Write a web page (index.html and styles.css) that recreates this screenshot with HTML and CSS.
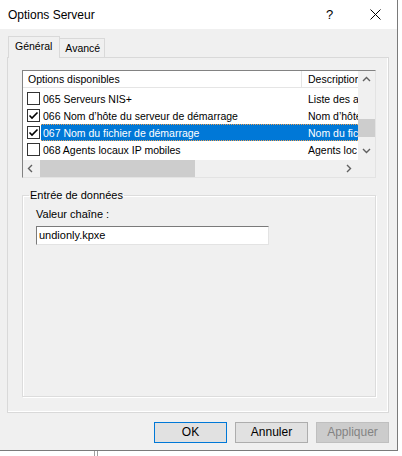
FILE: index.html
```html
<!DOCTYPE html>
<html lang="fr">
<head>
<meta charset="utf-8">
<title>Options Serveur</title>
<link rel="stylesheet" href="styles.css">
</head>
<body>
<div class="window">
  <div class="titlebar">
    <span class="title">Options Serveur</span>
    <span class="help">?</span>
    <span class="close"><svg width="11" height="11" viewBox="0 0 11 11"><path d="M0.5 0.5 L10.5 10.5 M10.5 0.5 L0.5 10.5" stroke="#000" stroke-width="1" fill="none"/></svg></span>
  </div>
  <div class="tabs">
    <div class="tab active">Général</div>
    <div class="tab">Avancé</div>
  </div>
  <div class="panel">
    <div class="listbox">
      <div class="list-main">
        <div class="header">
          <div class="hcell c1">Options disponibles</div>
          <div class="hcell c2">Description</div>
        </div>
        <div class="rows">
          <div class="row">
            <span class="check"></span>
            <div class="sel"><span class="cell c1">065 Serveurs NIS+</span><span class="cell c2">Liste des a</span></div>
          </div>
          <div class="row">
            <span class="check"><svg width="11" height="11" viewBox="0 0 11 11"><path d="M1.5 5.5 L4 8 L9.5 2.5" stroke="#000" stroke-width="1.6" fill="none"/></svg></span>
            <div class="sel"><span class="cell c1">066 Nom d’hôte du serveur de démarrage</span><span class="cell c2">Nom d’hôte</span></div>
          </div>
          <div class="row selected">
            <span class="check"><svg width="11" height="11" viewBox="0 0 11 11"><path d="M1.5 5.5 L4 8 L9.5 2.5" stroke="#000" stroke-width="1.6" fill="none"/></svg></span>
            <div class="sel"><span class="cell c1">067 Nom du fichier de démarrage</span><span class="cell c2">Nom du fic</span></div>
          </div>
          <div class="row">
            <span class="check"></span>
            <div class="sel"><span class="cell c1">068 Agents locaux IP mobiles</span><span class="cell c2">Agents loc</span></div>
          </div>
        </div>
      </div>
      <div class="vscroll">
        <svg class="arrow" width="9" height="6" viewBox="0 0 9 6"><path d="M1 5 L4.5 1.5 L8 5" stroke="#606060" stroke-width="1.4" fill="none"/></svg>
        <div class="vtrack"><div class="vthumb"></div></div>
        <svg class="arrow" width="9" height="6" viewBox="0 0 9 6"><path d="M1 1 L4.5 4.5 L8 1" stroke="#606060" stroke-width="1.4" fill="none"/></svg>
      </div>
      <div class="hscroll">
        <svg class="harrow" width="6" height="9" viewBox="0 0 6 9"><path d="M5 1 L1.5 4.5 L5 8" stroke="#606060" stroke-width="1.4" fill="none"/></svg>
        <div class="htrack"><div class="hthumb"></div></div>
        <svg class="harrow" width="6" height="9" viewBox="0 0 6 9"><path d="M1 1 L4.5 4.5 L1 8" stroke="#606060" stroke-width="1.4" fill="none"/></svg>
      </div>
      <div class="corner"></div>
    </div>
    <fieldset class="group">
      <legend>Entrée de données</legend>
      <div class="group-body">
        <div class="label">Valeur chaîne :</div>
        <div class="input">undionly.kpxe</div>
      </div>
    </fieldset>
  </div>
  <div class="buttons">
    <div class="btn default">OK</div>
    <div class="btn">Annuler</div>
    <div class="btn disabled">Appliquer</div>
  </div>
</div>
<div class="below"></div>
</body>
</html>
```
FILE: styles.css
```css
html, body {
  margin: 0;
  padding: 0;
}
body {
  background: #fff;
  font-family: "Liberation Sans", Arial, sans-serif;
  font-size: 11px;
  color: #000;
  width: 402px;
  height: 456px;
  overflow: hidden;
}
.window {
  width: 397px;
  height: 450px;
  background: #f0f0f0;
  border-right: 1px solid #7a7a7a;
  border-bottom: 1px solid #7a7a7a;
  display: flex;
  flex-direction: column;
}
.titlebar {
  height: 29px;
  flex: none;
  background: #fff;
  display: flex;
  align-items: center;
  padding-left: 8px;
  font-size: 12px;
}
.title {
  flex: 1;
}
.help {
  width: 12px;
  margin-right: 32px;
  font-size: 13px;
}
.close {
  width: 11px;
  height: 11px;
  margin-right: 16px;
  display: flex;
}
.tabs {
  display: flex;
  align-items: flex-end;
  height: 20px;
  margin: 8px 0 0 8px;
  flex: none;
  position: relative;
  z-index: 1;
  font-size: 10.5px;
}
.tab {
  height: 18px;
  line-height: 18px;
  padding: 0 4px 0 5px;
  border: 1px solid #d9d9d9;
  border-bottom: none;
  background: #f0f0f0;
}
.tab.active {
  height: 21px;
  line-height: 19px;
  padding: 0 7px 0 6px;
  margin-bottom: -1px;
  border-right: 1px solid #d9d9d9;
}
.tab + .tab {
  border-left: none;
}
.panel {
  flex: none;
  box-sizing: border-box;
  height: 356px;
  margin: 0 8px 0 7px;
  border: 1px solid #d9d9d9;
  box-shadow: inset -1px -1px 0 #fff;
  padding: 12px 12px 15px 14px;
  display: flex;
  flex-direction: column;
}
.listbox {
  flex: none;
  height: 106px;
  border: 1px solid;
  border-color: #828282 #e3e3e3 #e3e3e3 #828282;
  background: #fff;
  display: grid;
  grid-template-columns: 1fr 17px;
  grid-template-rows: 1fr 17px;
  font-size: 10.5px;
}
.list-main {
  overflow: hidden;
  min-width: 0;
}
.header {
  display: flex;
  height: 16px;
  border-bottom: 1px solid #e5e5e5;
  background: #fff;
  white-space: nowrap;
}
.hcell {
  line-height: 16px;
}
.hcell.c1 {
  width: 273px;
  flex: none;
  padding-left: 5px;
  border-right: 1px solid #e5e5e5;
}
.hcell.c2 {
  padding-left: 6px;
}
.rows {
  padding-top: 2px;
}
.row {
  display: flex;
  align-items: center;
  height: 17px;
  white-space: nowrap;
}
.check {
  flex: none;
  width: 11px;
  height: 11px;
  border: 1px solid #333;
  background: #fff;
  margin-left: 4px;
  margin-right: 1px;
  display: flex;
}
.sel {
  display: flex;
  height: 17px;
  align-items: center;
  box-sizing: border-box;
  flex: 1;
  min-width: 0;
}
.cell {
  overflow: hidden;
}
.cell.c1 {
  width: 259px;
  padding-left: 2px;
  flex: none;
}
.cell.c2 {
  padding-left: 6px;
}
.row.selected .sel {
  background: #0078d7;
  color: #fff;
  border-top: 1px dotted #f0a050;
  border-bottom: 1px dotted #f0a050;
}
.vscroll {
  background: #f0f0f0;
  display: flex;
  flex-direction: column;
  align-items: center;
}
.arrow {
  flex: none;
  margin: 5px 0 6px;
}
.vtrack {
  flex: 1;
  width: 100%;
  padding-top: 31px;
  box-sizing: border-box;
}
.vthumb {
  height: 18px;
  background: #cdcdcd;
}
.hscroll {
  background: #f0f0f0;
  display: flex;
  align-items: center;
}
.harrow {
  flex: none;
  margin: 0 6px 0 4px;
}
.htrack {
  flex: 1;
  height: 100%;
  display: flex;
  align-items: center;
}
.hthumb {
  width: 155px;
  margin-left: 1px;
  height: 17px;
  background: #cdcdcd;
}
.corner {
  background: #f0f0f0;
}
.group {
  flex: 1;
  margin: 11px 0 0 0;
  padding: 0;
  border: 1px solid #dcdcdc;
  box-shadow: inset 1px 1px 0 #fff, 1px 1px 0 #fff;
  min-width: 0;
}
.group legend {
  margin-left: 6px;
  padding: 0 1px;
  line-height: 13px;
}
.group-body {
  padding: 6px 0 0 13px;
}
.label {
  line-height: 13px;
}
.input {
  margin-top: 5px;
  width: 233px;
  height: 19px;
  box-sizing: border-box;
  background: #fff;
  border: 1px solid;
  border-color: #7a7a7a #e3e3e3 #e3e3e3 #7a7a7a;
  padding-left: 2px;
  line-height: 17px;
}
.buttons {
  display: flex;
  justify-content: flex-end;
  gap: 8px;
  margin-top: 9px;
  padding-right: 8px;
}
.btn {
  width: 73px;
  height: 21px;
  box-sizing: border-box;
  border: 1px solid #adadad;
  background: #e1e1e1;
  text-align: center;
  line-height: 19px;
  font-size: 12px;
}
.btn.default {
  border-color: #0078d7;
}
.btn.disabled {
  background: #cccccc;
  border-color: #bfbfbf;
  color: #838383;
}
.below {
  width: 2px;
  height: 5px;
  margin-left: 94px;
  border-left: 1px solid #a0a0a0;
  border-right: 1px solid #a0a0a0;
}
```
